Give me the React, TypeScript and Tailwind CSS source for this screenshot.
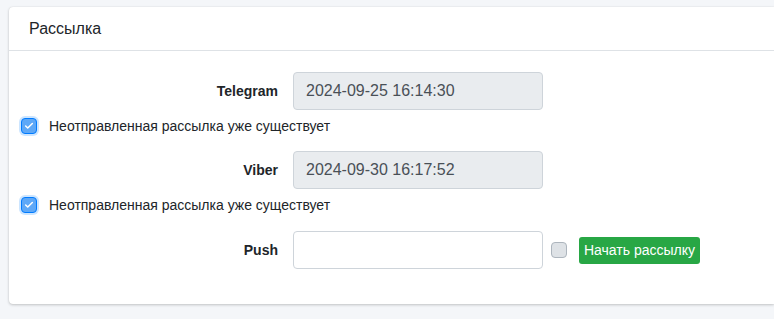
import { Check } from "lucide-react";

type Row = { label: string; value: string };

const rows: Row[] = [
  { label: "Telegram", value: "2024-09-25 16:14:30" },
  { label: "Viber", value: "2024-09-30 16:17:52" },
];

function CheckedBox() {
  return (
    <span className="flex h-4 w-4 items-center justify-center rounded-[4px] border border-[#007bff] bg-[#5ea8f7] ring-2 ring-[#80bdff]/40">
      <Check className="h-[10px] w-[10px] text-white" strokeWidth={3.5} />
    </span>
  );
}

export default function App() {
  return (
    <div className="min-h-[319px] bg-[#f4f6f9] pl-[9px] pt-[7px] font-['Liberation_Sans',Arial,sans-serif] text-[#212529]">
      <div className="rounded-l-[4px] bg-white shadow-[0_0_1px_rgba(0,0,0,0.125),0_1px_3px_rgba(0,0,0,0.2)]">
        <div className="flex h-[44px] items-center border-b border-[#dee2e6] px-5">
          <h3 className="text-[16px] leading-none">Рассылка</h3>
        </div>

        <div className="pb-[35px] pl-[12px] pt-[21px] text-[14px]">
          {rows.map((r, i) => (
            <div key={r.label} className={i > 0 ? "mt-[13px]" : ""}>
              <div className="flex items-center">
                <label className="w-[257px] text-right font-bold">{r.label}</label>
                <div className="ml-[15px] flex h-[38px] w-[250px] items-center rounded-[4px] border border-[#ced4da] bg-[#e9ecef] px-3 text-[16px] text-[#495057]">
                  {r.value}
                </div>
              </div>
              <div className="mt-[4px] flex h-[24px] items-center">
                <CheckedBox />
                <span className="ml-3">Неотправленная рассылка уже существует</span>
              </div>
            </div>
          ))}

          <div className="mt-[14px] flex items-center">
            <label className="w-[257px] text-right font-bold">Push</label>
            <input
              type="text"
              className="ml-[15px] h-[38px] w-[250px] rounded-[4px] border border-[#ced4da] bg-white px-3 text-[16px] outline-none"
            />
            <span className="ml-[8px] h-4 w-4 rounded-[4px] border border-[#adb5bd] bg-[#dee2e6]" />
            <button className="ml-[12px] flex h-[27px] w-[121px] items-center justify-center rounded-[3px] bg-[#28a745] text-[14px] text-white">
              Начать рассылку
            </button>
          </div>
        </div>
      </div>
    </div>
  );
}
